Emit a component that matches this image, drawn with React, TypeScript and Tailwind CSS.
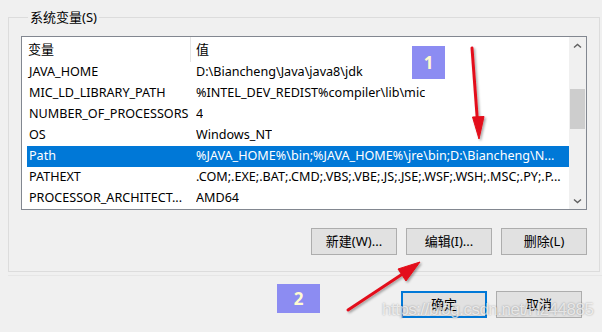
import { ReactNode } from "react";

type Row = { name: string; value: string; selected?: boolean };

const rows: Row[] = [
  { name: "JAVA_HOME", value: "D:\\Biancheng\\Java\\java8\\jdk" },
  { name: "MIC_LD_LIBRARY_PATH", value: "%INTEL_DEV_REDIST%compiler\\lib\\mic" },
  { name: "NUMBER_OF_PROCESSORS", value: "4" },
  { name: "OS", value: "Windows_NT" },
  { name: "Path", value: "%JAVA_HOME%\\bin;%JAVA_HOME%\\jre\\bin;D:\\Biancheng\\N...", selected: true },
  { name: "PATHEXT", value: ".COM;.EXE;.BAT;.CMD;.VBS;.VBE;.JS;.JSE;.WSF;.WSH;.MSC;.PY;.P..." },
  { name: "PROCESSOR_ARCHITECT...", value: "AMD64" },
];

const WinButton = ({ children, primary }: { children: ReactNode; primary?: boolean }) => (
  <button
    className={
      primary
        ? "w-[86px] h-[27px] border-2 border-[#0078d7] bg-[#e1e1e1] text-[13px] text-black"
        : "w-[86px] h-[27px] border border-[#adadad] bg-[#e1e1e1] text-[13px] text-black"
    }
  >
    {children}
  </button>
);

const Chevron = ({ down }: { down?: boolean }) => (
  <svg width="9" height="6" viewBox="0 0 9 6">
    <path
      d={down ? "M1 1.5 L4.5 4.5 L8 1.5" : "M1 4.5 L4.5 1.5 L8 4.5"}
      fill="none"
      stroke="#606060"
      strokeWidth="1.4"
    />
  </svg>
);

export default function App() {
  return (
    <div
      className="relative w-[602px] h-[332px] overflow-hidden bg-[#f0f0f0] text-black"
      style={{ fontFamily: '"Noto Sans", "Noto Sans CJK SC", sans-serif' }}
    >
      {/* 系统变量 group */}
      <fieldset className="ml-[8px] mt-[9px] w-[589px] border border-[#dcdcdc] px-[12px] pb-[16px]">
        <legend className="ml-[7px] px-[2px] text-[13px] leading-[16px]">系统变量(S)</legend>

        {/* List */}
        <div className="mt-[11px] flex h-[174px] w-[566px] border border-[#828790] bg-white">
          <div className="flex-1 overflow-hidden">
            {/* Header */}
            <div className="flex h-[25px] items-center text-[13px]">
              <div className="w-[168px] pl-[6px]">变量</div>
              <div className="h-full w-px bg-[#e5e5e5]" />
              <div className="pl-[5px]">值</div>
            </div>
            {/* Rows */}
            {rows.map((row) => (
              <div
                key={row.name}
                className={
                  row.selected
                    ? "ml-[5px] flex h-[21px] items-center whitespace-nowrap bg-[#0078d7] text-[12.6px] text-white"
                    : "ml-[5px] flex h-[21px] items-center whitespace-nowrap text-[12.6px]"
                }
              >
                <div className="w-[169px] shrink-0 pl-[2px]">{row.name}</div>
                <div className="overflow-hidden">{row.value}</div>
              </div>
            ))}
          </div>
          {/* Scrollbar */}
          <div className="flex w-[17px] flex-col items-center bg-[#f0f0f0]">
            <div className="flex h-[17px] w-full items-center justify-center">
              <Chevron />
            </div>
            <div className="mt-[35px] h-[40px] w-[15px] bg-[#cdcdcd]" />
            <div className="mt-auto flex h-[17px] w-full items-center justify-center">
              <Chevron down />
            </div>
          </div>
        </div>

        {/* List buttons */}
        <div className="mt-[18px] flex justify-end gap-[9px]">
          <WinButton>新建(W)...</WinButton>
          <WinButton>编辑(I)...</WinButton>
          <WinButton>删除(L)</WinButton>
        </div>
      </fieldset>

      <div className="ml-[8px] mt-[3px] h-px bg-[#e6e6e6]" />

      {/* Dialog buttons */}
      <div className="mt-[15px] flex justify-end gap-[9px] pr-[20px]">
        <WinButton primary>确定</WinButton>
        <WinButton>取消</WinButton>
      </div>

      {/* Annotation badges */}
      <div className="absolute left-[412px] top-[46px] flex h-[33px] w-[33px] items-center justify-center bg-[#8c8cf2] text-[17px] font-bold text-[#fffbd0]">
        1
      </div>
      <div className="absolute left-[277px] top-[284px] flex h-[29px] w-[43px] items-center justify-center bg-[#8c8cf2] text-[17px] font-bold text-[#fffbd0]">
        2
      </div>

      {/* Red arrows */}
      <svg className="pointer-events-none absolute inset-0" width="602" height="332" viewBox="0 0 602 332">
        <defs>
          <filter id="sh" x="-20%" y="-20%" width="140%" height="140%">
            <feDropShadow dx="1.5" dy="1.5" stdDeviation="1.2" floodColor="#000" floodOpacity="0.35" />
          </filter>
        </defs>
        <g filter="url(#sh)" fill="#e3101a" stroke="#e3101a">
          <line x1="472" y1="48" x2="477.5" y2="122" strokeWidth="3" strokeLinecap="round" />
          <polygon points="479,139 472.5,117 484,116.5" strokeWidth="1" />
          <line x1="348" y1="310" x2="404" y2="273" strokeWidth="3" strokeLinecap="round" />
          <polygon points="420,262 398,269 406,281" strokeWidth="1" />
        </g>
      </svg>

      {/* Watermark */}
      <div
        className="pointer-events-none absolute left-[382px] top-[299px] text-[17px] leading-[22px] tracking-[-0.5px] text-white/70 [text-shadow:0_0_2px_rgba(0,0,0,0.35)]"
        style={{ fontFamily: '"Liberation Sans", sans-serif' }}
      >
        https://blog.csdn.net/H244885
      </div>
    </div>
  );
}
